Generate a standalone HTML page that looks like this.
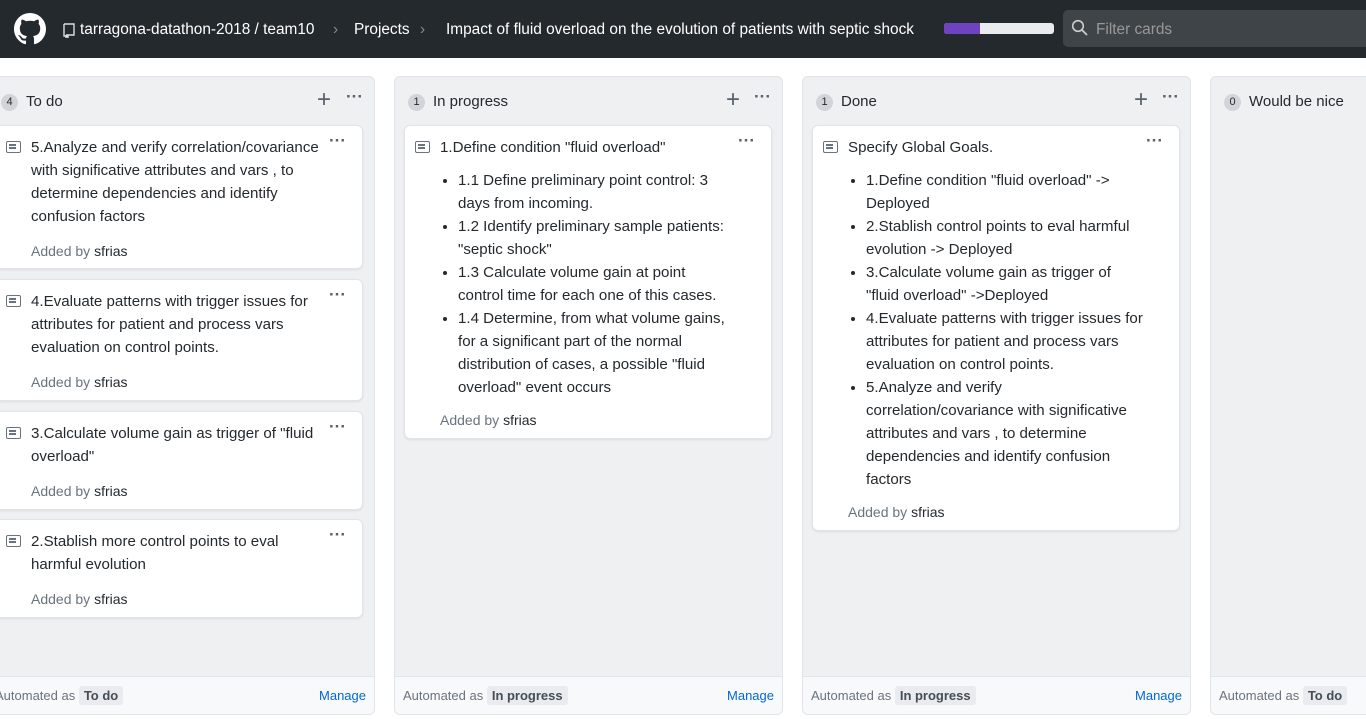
<!DOCTYPE html>
<html><head><style>
*{box-sizing:border-box;margin:0;padding:0}
body{width:1366px;height:719px;overflow:hidden;background:#fff;font-family:"Liberation Sans",sans-serif;color:#24292e;position:relative}
.hdr{position:absolute;left:0;top:0;width:1366px;height:58px;background:#24292e;color:#fff;font-size:15.4px}
.hdr span{position:absolute;top:21px;white-space:nowrap}
.col{position:absolute;top:76px;width:389px;height:639px;background:#eff0f2;border:1px solid #e1e4e8;border-radius:6px;overflow:hidden}
.ch{position:absolute;top:16px;left:0;font-size:15px;font-weight:normal;white-space:nowrap}
.badge{display:inline-block;width:17px;height:17px;border-radius:50%;background:#d1d5da;font-size:11px;text-align:center;line-height:17px;font-weight:normal;margin-right:8px;vertical-align:1px}
.plus{position:absolute;top:9px;font-size:24px;color:#586069}
.dots{position:absolute;font-size:17px;color:#586069;font-weight:bold}
.foot{position:absolute;left:0;bottom:0;width:100%;height:38px;background:#f8f9fa;border-top:1px solid #e1e4e8;font-size:13px;color:#6a737d}
.foot .a{position:absolute;top:11px;white-space:nowrap}
.foot b{background:#e9ebee;color:#444d56;padding:2px 5px;border-radius:3px;font-weight:bold}
.foot .m{position:absolute;right:8px;top:11px;color:#0366d6}
.card{position:absolute;width:368px;background:#fff;border:1px solid #e1e4e8;border-radius:6px;box-shadow:0 1px 2px rgba(0,0,0,.08);font-size:15.1px;line-height:23px}
.card .t{position:absolute;left:35px;top:10px;white-space:nowrap}
.card .ic{position:absolute;left:10px;top:15px;width:15px;height:12px;border:1.5px solid #6a737d;border-radius:2px}
.card .ic:after{content:"";position:absolute;left:2px;top:2px;width:7px;height:1.5px;background:#6a737d;box-shadow:0 3px 0 #6a737d}
.card .d{position:absolute;right:16px;top:3px;font-size:17px;color:#586069;font-weight:bold}
.card ul{position:absolute;left:35px;top:43px;padding-left:18px;white-space:nowrap}
.card li{line-height:23px;height:auto}
.card .by{position:absolute;left:35px;font-size:14px;color:#6a737d}
.card .by i{font-style:normal;color:#24292e}
</style></head><body>
<div class="hdr">
<svg style="position:absolute;left:14px;top:13px" width="32" height="32" viewBox="0 0 16 16"><path fill="#fff" d="M8 0C3.58 0 0 3.58 0 8c0 3.540 2.29 6.53 5.47 7.59.4.07.55-.17.55-.38 0-.19-.01-.82-.01-1.490-2.01.37-2.53-.49-2.690-.94-.09-.23-.48-.94-.82-1.13-.28-.15-.68-.52-.01-.53.63-.01 1.080.58 1.230.82.72 1.21 1.87.87 2.33.66.07-.52.28-.87.51-1.07-1.78-.2-3.64-.89-3.64-3.95 0-.87.31-1.59.82-2.15-.08-.2-.36-1.02.08-2.12 0 0 .67-.21 2.2.82.64-.18 1.32-.27 2-.27.68 0 1.36.09 2 .27 1.53-1.04 2.2-.82 2.2-.82.44 1.1.16 1.92.08 2.12.51.56.82 1.27.82 2.15 0 3.07-1.87 3.75-3.65 3.95.29.25.54.73.54 1.48 0 1.07-.01 1.93-.01 2.2 0 .21.15.46.55.38A8.013 8.013 0 0016 8c0-4.42-3.58-8-8-8z"/></svg>
<svg style="position:absolute;left:63px;top:23px" width="12" height="15" viewBox="0 0 12 15"><path fill="none" stroke="#ddd" stroke-width="1.4" d="M1 1h10v11H3M1 1v12h2M3 12v2.5l1-1 1 1V12"/></svg>
<span style="left:80px">tarragona-datathon-2018 / team10</span>
<span style="left:333px;color:#888">›</span>
<span style="left:354px">Projects</span>
<span style="left:420px;color:#888">›</span>
<span style="left:446px">Impact of fluid overload on the evolution of patients with septic shock</span>
<div style="position:absolute;left:944px;top:23px;width:110px;height:11px;border-radius:3px;background:#e9ebee;overflow:hidden"><div style="width:36px;height:11px;background:#6f42c1"></div></div>
<div style="position:absolute;left:1063px;top:10px;width:310px;height:37px;background:#3f4448;border-radius:5px"></div>
<svg style="position:absolute;left:1071px;top:19px" width="18" height="18" viewBox="0 0 18 18"><circle cx="7" cy="7" r="5.3" fill="none" stroke="#ccc" stroke-width="1.6"/><path d="M11 11l5 5" stroke="#ccc" stroke-width="1.8"/></svg>
<span style="left:1096px;color:#999">Filter cards</span>
</div>

<div class="col" style="left:-14px">
<div class="ch" style="left:14px"><span class="badge">4</span>To do</div>
<div class="plus" style="left:330px">+</div><div class="dots" style="left:359px;top:10px">···</div>
<div class="card" style="left:8px;top:48px;height:144px"><div class="ic"></div><div class="t">5.Analyze and verify correlation/covariance<br>with significative attributes and vars , to<br>determine dependencies and identify<br>confusion factors</div><div class="d">···</div><div class="by" style="top:114px">Added by <i>sfrias</i></div></div>
<div class="card" style="left:8px;top:202px;height:122px"><div class="ic"></div><div class="t">4.Evaluate patterns with trigger issues for<br>attributes for patient and process vars<br>evaluation on control points.</div><div class="d">···</div><div class="by" style="top:91px">Added by <i>sfrias</i></div></div>
<div class="card" style="left:8px;top:334px;height:99px"><div class="ic"></div><div class="t">3.Calculate volume gain as trigger of "fluid<br>overload"</div><div class="d">···</div><div class="by" style="top:68px">Added by <i>sfrias</i></div></div>
<div class="card" style="left:8px;top:442px;height:99px"><div class="ic"></div><div class="t">2.Stablish more control points to eval<br>harmful evolution</div><div class="d">···</div><div class="by" style="top:68px">Added by <i>sfrias</i></div></div>
<div class="foot"><div class="a" style="left:8px">Automated as <b>To do</b></div><div class="m">Manage</div></div>
</div>

<div class="col" style="left:394px">
<div class="ch" style="left:13px"><span class="badge">1</span>In progress</div>
<div class="plus" style="left:331px">+</div><div class="dots" style="left:359px;top:10px">···</div>
<div class="card" style="left:9px;top:48px;height:314px"><div class="ic"></div><div class="t">1.Define condition "fluid overload"</div><div class="d">···</div>
<ul><li>1.1 Define preliminary point control: 3<br>days from incoming.</li><li>1.2 Identify preliminary sample patients:<br>"septic shock"</li><li>1.3 Calculate volume gain at point<br>control time for each one of this cases.</li><li>1.4 Determine, from what volume gains,<br>for a significant part of the normal<br>distribution of cases, a possible "fluid<br>overload" event occurs</li></ul>
<div class="by" style="top:283px">Added by <i>sfrias</i></div></div>
<div class="foot"><div class="a" style="left:8px">Automated as <b>In progress</b></div><div class="m">Manage</div></div>
</div>

<div class="col" style="left:802px">
<div class="ch" style="left:13px"><span class="badge">1</span>Done</div>
<div class="plus" style="left:331px">+</div><div class="dots" style="left:359px;top:10px">···</div>
<div class="card" style="left:9px;top:48px;height:406px"><div class="ic"></div><div class="t">Specify Global Goals.</div><div class="d">···</div>
<ul><li>1.Define condition "fluid overload" -&gt;<br>Deployed</li><li>2.Stablish control points to eval harmful<br>evolution -&gt; Deployed</li><li>3.Calculate volume gain as trigger of<br>"fluid overload" -&gt;Deployed</li><li>4.Evaluate patterns with trigger issues for<br>attributes for patient and process vars<br>evaluation on control points.</li><li>5.Analyze and verify<br>correlation/covariance with significative<br>attributes and vars , to determine<br>dependencies and identify confusion<br>factors</li></ul>
<div class="by" style="top:375px">Added by <i>sfrias</i></div></div>
<div class="foot"><div class="a" style="left:8px">Automated as <b>In progress</b></div><div class="m">Manage</div></div>
</div>

<div class="col" style="left:1210px;width:200px">
<div class="ch" style="left:13px"><span class="badge">0</span>Would be nice</div>
<div class="foot"><div class="a" style="left:8px">Automated as <b>To do</b></div></div>
</div>
</body></html>
